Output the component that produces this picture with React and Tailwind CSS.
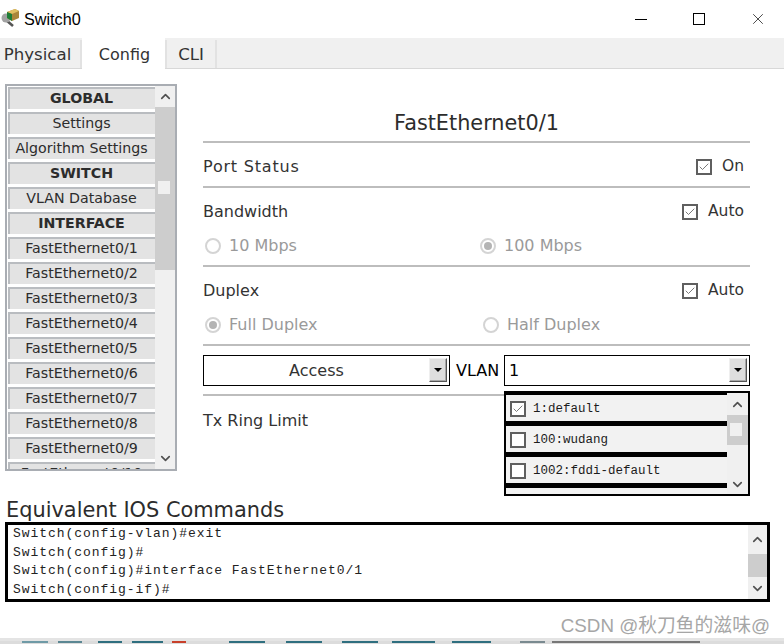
import { ChevronDown, ChevronUp, Check, X } from "lucide-react";

const MENU = [
  { label: "GLOBAL", head: true },
  { label: "Settings" },
  { label: "Algorithm Settings" },
  { label: "SWITCH", head: true },
  { label: "VLAN Database" },
  { label: "INTERFACE", head: true },
  ...[1, 2, 3, 4, 5, 6, 7, 8, 9, 10].map((n) => ({ label: `FastEthernet0/${n}` })),
];

const VLANS = [
  { label: "1:default", checked: true },
  { label: "100:wudang" },
  { label: "1002:fddi-default" },
];

const COMMANDS = [
  "Switch(config-vlan)#exit",
  "Switch(config)#",
  "Switch(config)#interface FastEthernet0/1",
  "Switch(config-if)#",
];

// slivers of the desktop that show under the window: [x, width, colour]
const DESKTOP_BITS = [
  [22, 26, "#6f9aa6"],
  [58, 24, "#5b8793"],
  [98, 24, "#2f6f7f"],
  [132, 31, "#2f6f7f"],
  [172, 14, "#c8402a"],
  [229, 36, "#2f6f7f"],
  [286, 36, "#2f6f7f"],
  [342, 36, "#2f6f7f"],
  [392, 43, "#2f6f7f"],
  [452, 39, "#2f6f7f"],
  [520, 25, "#7a8a90"],
  [552, 148, "#777777"],
];

function Chevron({ down, size = 15 }) {
  const Icon = down ? ChevronDown : ChevronUp;
  return <Icon size={size} strokeWidth={2.6} className="text-[#505050]" />;
}

function CheckBox({ checked }) {
  return (
    <span className="flex h-4 w-4 shrink-0 items-center justify-center border-2 border-[#5f5f5f] bg-white">
      {checked && <Check size={14} strokeWidth={1.8} className="text-[#6a6a6a]" />}
    </span>
  );
}

function Radio({ text, selected, width }) {
  return (
    <div className={`flex items-center gap-2 text-[#9a9a9a] ${width}`}>
      <span className="flex h-[16px] w-[16px] items-center justify-center rounded-full border-2 border-[#d4d4d4] bg-white">
        {selected && <span className="h-2 w-2 rounded-full bg-[#b4b4b4]" />}
      </span>
      {text}
    </div>
  );
}

function ComboArrow() {
  return (
    <span className="flex h-[24px] w-[18px] items-center justify-center border border-t-[#efefef] border-l-[#efefef] border-r-[#555] border-b-[#555] bg-[#dedede] shadow-[inset_-1px_-1px_0_#a8a8a8]">
      <span className="h-0 w-0 border-x-[4px] border-t-[4px] border-x-transparent border-t-black" />
    </span>
  );
}

function Sidebar() {
  return (
    <div className="flex h-[387px] w-[172px] shrink-0 border-2 border-[#a9adb3] bg-white">
      <div className="flex w-[148px] flex-col gap-[3px] overflow-hidden pt-px pl-px">
        {MENU.map((m) => (
          <div
            key={m.label}
            className={`flex h-[22px] shrink-0 items-center justify-center border-t-2 border-l-2 border-[#b9bcc0] bg-[#e3e3e3] pr-[2px] pb-[2px] text-[14.2px] leading-none text-[#2c2c2c] ${m.head ? "font-bold" : ""}`}
          >
            {m.label}
          </div>
        ))}
      </div>
      <div className="relative flex flex-1 flex-col bg-[#f0f0f0]">
        <div className="flex h-[21px] items-center justify-center">
          <Chevron />
        </div>
        <div className="h-[163px] bg-[#cdcdcd]" />
        <div className="flex-1" />
        <div className="flex h-[21px] items-center justify-center">
          <Chevron down />
        </div>
        <div className="absolute left-[3px] top-[95px] h-[13px] w-[12px] bg-[#f0f0f0]" />
      </div>
    </div>
  );
}

function Row({ label, trailing, tight, tracking }) {
  return (
    <div className={`flex items-center justify-between pt-[4px] pr-[6px] ${tight ? "h-[43px]" : "h-[44px]"}`}>
      <span className={tracking}>{label}</span>
      <span className="flex items-center gap-[10px] text-[15.5px]">
        <CheckBox checked />
        {trailing}
      </span>
    </div>
  );
}

function Line() {
  return <div className="h-[2px] bg-[#bdbdbd]" />;
}

function VlanPopup() {
  return (
    <div className="absolute left-[301px] top-[308px] flex h-[105px] w-[246px] border-2 border-black bg-[#f2f2f2]">
      <div className="flex w-[221px] flex-col overflow-hidden border-t-2 border-black">
        {VLANS.map((v) => (
          <div
            key={v.label}
            className="flex h-[31px] shrink-0 items-center gap-[7px] border-b-[5px] border-black pt-[2px] pl-[4px] font-['Liberation_Mono',monospace] text-[12.5px] text-[#1c1c1c]"
          >
            <CheckBox checked={v.checked} />
            {v.label}
          </div>
        ))}
      </div>
      <div className="relative flex flex-1 flex-col bg-[#f0f0f0]">
        <div className="flex h-[22px] items-center justify-center">
          <Chevron />
        </div>
        <div className="h-[30px] bg-[#cdcdcd]" />
        <div className="flex-1" />
        <div className="flex h-[20px] items-center justify-center">
          <Chevron down />
        </div>
        <div className="absolute left-[3px] top-[30px] h-[13px] w-[12px] bg-[#f0f0f0]" />
      </div>
    </div>
  );
}

function PortPanel() {
  return (
    <div className="relative ml-[26px] flex w-[547px] flex-col text-[16px] text-[#333]">
      <div className="flex h-[58px] items-end justify-center pb-[2px] text-[20.8px] text-[#2c2c2c]">FastEthernet0/1</div>
      <Line />
      <Row label="Port Status" trailing="On" tight tracking="tracking-[0.8px]" />
      <Line />
      <Row label="Bandwidth" trailing="Auto" />
      <div className="flex h-[33px] items-start pt-[2px] pl-[2px]">
        <Radio text="10 Mbps" width="w-[275px]" />
        <Radio text="100 Mbps" selected />
      </div>
      <Line />
      <Row label="Duplex" trailing="Auto" />
      <div className="flex h-[33px] items-start pt-[2px] pl-[2px]">
        <Radio text="Full Duplex" selected width="w-[278px]" />
        <Radio text="Half Duplex" />
      </div>
      <Line />
      <div className="flex h-[48px] items-center">
        <div className="flex h-[31px] w-[247px] items-center border border-black pr-[2px]">
          <span className="flex-1 pt-[2px] text-center">Access</span>
          <ComboArrow />
        </div>
        <span className="w-[54px] pt-[2px] pl-[6px] text-black">VLAN</span>
        <div className="flex h-[31px] flex-1 items-center border border-black pr-[2px] pl-[4px]">
          <span className="flex-1 pt-[2px] text-black">1</span>
          <ComboArrow />
        </div>
      </div>
      <Line />
      <div className="flex h-[48px] items-center pt-[2px]">Tx Ring Limit</div>
      <VlanPopup />
    </div>
  );
}

function CommandBox() {
  return (
    <div className="mx-[5px] flex h-[80px] w-[765px] shrink-0 border-[3px] border-black bg-white">
      <div className="flex-1 pl-[5px] font-['Liberation_Mono',monospace] text-[13px] leading-[18.7px] tracking-[0.95px] text-[#222]">
        {COMMANDS.map((c) => (
          <div key={c}>{c}</div>
        ))}
      </div>
      <div className="flex w-[19px] flex-col bg-[#f0f0f0]">
        <div className="flex h-[29px] items-center justify-center">
          <Chevron />
        </div>
        <div className="h-[23px] bg-[#cdcdcd]" />
        <div className="flex flex-1 items-center justify-center">
          <Chevron down />
        </div>
      </div>
    </div>
  );
}

function SwitchIcon() {
  return (
    <svg width="19" height="20" viewBox="0 0 19 20">
      <path d="M5 12 L12 18" stroke="#555" strokeWidth="2.6" fill="none" />
      <circle cx="5" cy="10" r="4.5" fill="#a2a2a2" />
      <path d="M6 4 L14 1 L18 3 L18 10 L11 13 L6 10 Z" fill="#a9853a" />
      <path d="M6 4 L11 6 L18 3 L14 1 Z" fill="#e0bf62" />
      <path d="M6 4 L11 6 L11 13 L6 10 Z" fill="#1f7d36" />
    </svg>
  );
}

function DesktopStrip() {
  return (
    <svg width="784" height="3" viewBox="0 0 784 3" className="block">
      <rect width="784" height="3" fill="#dcdcdc" />
      {DESKTOP_BITS.map(([x, w, c]) => (
        <rect key={x} x={x} width={w} height="2" fill={c} />
      ))}
    </svg>
  );
}

export default function App() {
  return (
    <div className="relative flex h-[644px] w-[784px] flex-col overflow-hidden bg-white font-['DejaVu_Sans',sans-serif]">
      <div className="flex h-[38px] shrink-0 items-center">
        <span className="ml-[1px] mt-[-2px]">
          <SwitchIcon />
        </span>
        <span className="ml-[4px] font-['Liberation_Sans',sans-serif] text-[16.2px] text-black">Switch0</span>
        <div className="ml-auto flex items-center text-[#111]">
          <span className="flex w-[50px] justify-center">
            <span className="h-px w-[12px] bg-black" />
          </span>
          <span className="flex w-[66px] justify-center">
            <span className="h-[12px] w-[12px] border border-black" />
          </span>
          <span className="flex w-[52px] justify-center">
            <X size={18} strokeWidth={1} />
          </span>
        </div>
      </div>

      <div className="flex h-[31px] shrink-0 items-end border-b border-[#d8d8d8] bg-[#f0f0f0] text-[16.6px] text-[#333]">
        <div className="flex h-[28px] w-[82px] items-center justify-center border-r-2 border-[#e2e2e2] pt-[3px] pr-[5px]">Physical</div>
        <div className="mb-[-1px] flex h-[31px] w-[83px] items-center justify-center bg-white pt-[3px] pl-[2px] text-[16px]">Config</div>
        <div className="flex h-[28px] w-[52px] items-center justify-center border-x-2 border-[#e2e2e2] pt-[3px]">CLI</div>
      </div>

      <div className="mt-[15px] flex h-[413px] shrink-0 pl-[5px]">
        <Sidebar />
        <div className="mt-[-1px]">
          <PortPanel />
        </div>
      </div>

      <div className="flex h-[25px] shrink-0 items-end pb-[1px] pl-[6px] text-[20.9px] leading-none text-[#2c2c2c]">
        Equivalent IOS Commands
      </div>
      <CommandBox />

      <div className="mt-auto h-[3px] bg-[#e4e4e4]" />
      <DesktopStrip />
      <div className="absolute bottom-[8px] right-[14px] font-['Liberation_Sans','Noto_Sans_CJK_SC',sans-serif] text-[18.8px] leading-none text-[#a6a6a6]">
        CSDN @秋刀鱼的滋味@
      </div>
    </div>
  );
}
